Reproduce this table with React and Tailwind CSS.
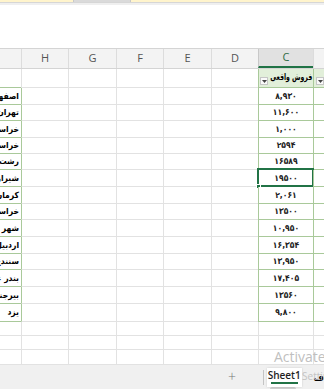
const COLS = [
  { key: 'I', w: 'w-[21px]' },
  { key: 'H', w: 'w-[47px]' },
  { key: 'G', w: 'w-[48px]' },
  { key: 'F', w: 'w-[47px]' },
  { key: 'E', w: 'w-[48px]' },
  { key: 'D', w: 'w-[47px]' },
  { key: 'C', w: 'w-[55px]' },
  { key: 'B', w: 'w-[11px]' },
];

const ROWS = [
  { city: 'اصفهان', value: '۸,۹۳۰', h: 'h-[17px]' },
  { city: 'تهران', value: '۱۱,۶۰۰', h: 'h-[16px]' },
  { city: 'خراسان رضوی', value: '۱,۰۰۰', h: 'h-[17px]' },
  { city: 'خراسان شمالی', value: '۲۵۹۴', h: 'h-[16px]' },
  { city: 'رشت', value: '۱۶۵۸۹', h: 'h-[16px]' },
  { city: 'شیراز', value: '۱۹۵۰۰', h: 'h-[17px]', selected: true },
  { city: 'کرمان', value: '۲,۰۶۱', h: 'h-[17px]' },
  { city: 'خراسان جنوبی', value: '۱۳۵۰۰', h: 'h-[16px]' },
  { city: 'شهر کرد', value: '۱۰,۹۵۰', h: 'h-[17px]' },
  { city: 'اردبیل', value: '۱۶,۳۵۴', h: 'h-[17px]' },
  { city: 'سنندج', value: '۱۳,۹۵۰', h: 'h-[16px]' },
  { city: 'بندر عباس', value: '۱۷,۴۰۵', h: 'h-[17px]' },
  { city: 'بیرجند', value: '۱۳۵۶۰', h: 'h-[17px]' },
  { city: 'یزد', value: '۹,۸۰۰', h: 'h-[18px]' },
];

const FA = { fontFamily: '"DejaVu Sans Condensed", "DejaVu Sans", Tahoma, sans-serif' };

function FilterButton() {
  return (
    <span className="flex h-[8px] w-[8px] shrink-0 items-center justify-center border border-[#c6c6c6] bg-[#fafafa]">
      <svg width="5" height="3" viewBox="0 0 5 3">
        <path d="M0 0h5L2.5 3z" fill="#444" />
      </svg>
    </span>
  );
}

function ColumnHeader() {
  return (
    <div className="flex h-[21px] border-y border-[#d4d4d4] bg-[#f3f3f3] text-[11px] text-[#555]">
      {COLS.map((c, i) => (
        <div
          key={c.key}
          className={
            c.key === 'C'
              ? `${c.w} flex items-center justify-center border-l border-[#c8c8c8] border-b-2 border-b-[#217346] bg-[#e1e1e1] text-[#2e6b45]`
              : `${c.w} flex items-center justify-center ${i > 0 ? 'border-l border-[#dcdcdc]' : ''}`
          }
        >
          {c.key !== 'I' && c.key !== 'B' ? c.key : ''}
        </div>
      ))}
    </div>
  );
}

function GridRow({ row, h, header }) {
  return (
    <div className={`flex ${h}`}>
      {/* I */}
      <div
        dir="rtl"
        className="flex w-[21px] items-center justify-start overflow-visible whitespace-nowrap border-b border-[#a9c99a] pr-[2px] text-[8.5px] font-bold text-black"
        style={FA}
      >
        {row ? row.city : ''}
      </div>
      {/* H */}
      <div className={`w-[47px] border-b border-l border-b-[#e2e2e2] ${row ? 'border-l-[#a9c99a]' : 'border-l-[#e2e2e2]'} bg-white`} />
      <div className="w-[48px] border-b border-l border-[#e2e2e2] bg-white" />
      <div className="w-[47px] border-b border-l border-[#e2e2e2] bg-white" />
      <div className="w-[48px] border-b border-l border-[#e2e2e2] bg-white" />
      <div className="w-[47px] border-b border-l border-[#e2e2e2] bg-white" />
      {/* C */}
      {header ? (
        <div className="relative flex w-[55px] items-center justify-end overflow-hidden border-b border-l border-[#a9c99a] bg-[#e2efda] pr-[1px]">
          <span dir="rtl" className="origin-right scale-x-[0.76] whitespace-nowrap text-[9px] font-bold text-black" style={FA}>
            فروش واقعی
          </span>
          <div className="absolute bottom-[2px] left-[1px]">
            <FilterButton />
          </div>
        </div>
      ) : (
        <div className="relative flex w-[55px] items-center justify-center border-b border-l border-[#a9c99a] bg-white text-[8.5px] font-bold text-[#222]" style={FA}>
          <span dir="ltr">{row.value}</span>
          {row.selected && (
            <>
              <div className="absolute left-[-2px] top-[-2px] h-[19px] w-[57px] border-2 border-[#217346]" />
              <div className="absolute bottom-[-3px] left-[-3px] h-[5px] w-[5px] border border-white bg-[#217346]" />
            </>
          )}
        </div>
      )}
      {/* B */}
      <div className={`relative w-[11px] border-b border-l border-[#a9c99a] ${header ? 'bg-[#e2efda]' : 'bg-white'}`}>
        {header && (
          <div className="absolute bottom-[2px] left-[2px]">
            <FilterButton />
          </div>
        )}
      </div>
    </div>
  );
}

function EmptyRow({ h }) {
  return (
    <div className={`flex ${h}`}>
      {COLS.map((c, i) => (
        <div key={c.key} className={`${c.w} border-b border-[#e2e2e2] bg-white ${i > 0 ? 'border-l' : ''}`} />
      ))}
    </div>
  );
}

export default function App() {
  return (
    <div className="relative h-[389px] w-[324px] overflow-hidden bg-white" style={{ fontFamily: '"Open Sans", "Liberation Sans", sans-serif' }}>
      {/* message bar strip */}
      <div className="relative h-[2px] bg-[#fff4cc]">
        <div className="absolute left-[73px] top-0 h-[2px] w-[58px] border-x border-[#c8c8c8] bg-[#dadada]" />
      </div>
      <div className="h-[1px] bg-[#d6d6d6]" />
      <div className="h-[2px] bg-[#efefef]" />
      <div className="h-[43px] bg-white" />

      <ColumnHeader />
      <GridRow header h="h-[19px]" />
      {ROWS.map((r) => (
        <GridRow key={r.value} row={r} h={r.h} />
      ))}
      <EmptyRow h="h-[14px]" />
      <EmptyRow h="h-[14px]" />
      <EmptyRow h="h-[15px]" />

      {/* sheet tabs */}
      <div className="relative flex h-[24px] items-center bg-[#f0f0f0]">
        <span className="ml-[226px] w-[12px] text-center text-[14px] font-light leading-none text-[#777]">+</span>
        <span className="ml-[25px] h-[15px] w-px bg-[#c4c4c4]" />
        <div className="relative z-10 ml-[3px] flex h-[19px] w-[35px] flex-col items-center justify-center bg-white shadow-[0_0_2px_rgba(0,0,0,0.15)]">
          <span className="text-[10px] font-semibold leading-none text-[#1e1e1e]">Sheet1</span>
          <span className="mt-[2px] h-[2px] w-[27px] bg-[#217346]" />
        </div>
        <span className="ml-[12px] text-[10px] font-bold text-black" style={FA}>ف</span>
        <div className="absolute bottom-0 left-[270px] h-[2px] w-[26px] rounded-t-sm bg-[#cfcfcf]" />
      </div>

      {/* activation watermark */}
      <div className="pointer-events-none absolute left-[274px] top-[350px] whitespace-nowrap text-[14px] leading-none text-[#bfbfbf]" style={{ fontFamily: '"Open Sans", sans-serif' }}>
        Activate Windows
      </div>
      <div className="pointer-events-none absolute left-[274px] top-[371px] whitespace-nowrap text-[10px] leading-none text-[#c4c4c4]" style={{ fontFamily: '"Open Sans", sans-serif' }}>
        Go to Settings to activate Windows.
      </div>
    </div>
  );
}
